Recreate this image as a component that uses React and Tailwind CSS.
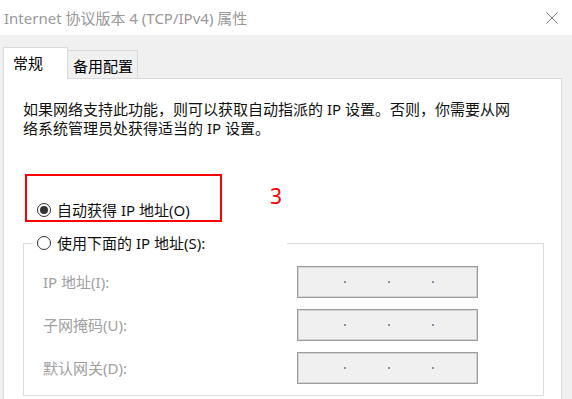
import React from "react";

const font = {
  fontFamily: '"Noto Sans", "Noto Sans CJK SC", sans-serif',
};

function Radio({ checked }) {
  return (
    <span className="flex h-[14px] w-[14px] shrink-0 items-center justify-center rounded-full border border-[#333333] bg-white">
      {checked && <span className="h-[8px] w-[8px] rounded-full bg-[#333333]" />}
    </span>
  );
}

function IpBox() {
  return (
    <div className="flex h-[32px] w-[181px] items-center border border-[#9c9c9c] bg-[#f0f0f0] shadow-[inset_0_0_0_1px_#d4d4d4]">
      <div className="flex items-center gap-[42px] pl-[46px]">
        <span className="h-[2px] w-[2px] bg-[#8c8ca8]" />
        <span className="h-[2px] w-[2px] bg-[#8c8ca8]" />
        <span className="h-[2px] w-[2px] bg-[#8c8ca8]" />
      </div>
    </div>
  );
}

export default function App() {
  const rows = ["IP 地址(I):", "子网掩码(U):", "默认网关(D):"];
  return (
    <div
      className="relative flex h-[399px] w-[572px] flex-col overflow-hidden bg-[#f0f0f0] text-[15px] text-[#111111]"
      style={font}
    >
      {/* title bar */}
      <div className="flex h-[35px] shrink-0 items-center justify-between bg-white pl-[4px] pr-[14px]">
        <span className="leading-[20px] text-[#999999]">Internet 协议版本 4 (TCP/IPv4) 属性</span>
        <svg width="12" height="12" viewBox="0 0 12 12" className="mt-[1px]">
          <path d="M0.5 0.5 L11.5 11.5 M11.5 0.5 L0.5 11.5" stroke="#7a7a7a" strokeWidth="1" />
        </svg>
      </div>

      {/* tabs */}
      <div className="flex items-end pl-[3px] pt-[12px]">
        <div className="relative z-10 -mb-px h-[32px] w-[65px] border border-b-0 border-[#d9d9d9] bg-white pl-[9px] pt-[5px] leading-[20px] text-black">
          常规
        </div>
        <div className="h-[28px] w-[70px] border border-l-0 border-b-0 border-[#d9d9d9] bg-[#f0f0f0] pl-[5px] pt-[5px] leading-[20px] text-black">
          备用配置
        </div>
      </div>

      {/* panel */}
      <div className="ml-[3px] flex-1 w-[559px] border border-b-0 border-[#d9d9d9] bg-white">
        <div className="pl-[19px] pt-[21px] leading-[19px]">
          <p>如果网络支持此功能，则可以获取自动指派的 IP 设置。否则，你需要从网</p>
          <p>络系统管理员处获得适当的 IP 设置。</p>
        </div>

        <div className="mt-[62px] flex h-[20px] items-center gap-[6px] pl-[33px] leading-[20px]">
          <Radio checked />
          <span>自动获得 IP 地址(O)</span>
        </div>

        <fieldset className="ml-[19px] mt-[13px] w-[521px] border border-[#dcdcdc] px-0 pb-[11px]">
          <legend className="ml-[9px] flex h-[20px] w-[254px] items-center gap-[6px] pl-[4px] leading-[20px]">
            <Radio />
            <span>使用下面的 IP 地址(S):</span>
          </legend>
          <div className="flex flex-col gap-[11px] pt-[13px]">
            {rows.map((r) => (
              <div key={r} className="flex items-center">
                <span className="w-[273px] pl-[19px] leading-[20px] text-[#a0a0a0]">{r}</span>
                <IpBox />
              </div>
            ))}
          </div>
        </fieldset>
      </div>

      {/* annotation overlay */}
      <div className="absolute left-[25px] top-[174px] h-[48px] w-[197px] border-2 border-[#ff0000]" />
      <span className="absolute left-[270px] top-[182px] text-[21px] leading-[28px] text-[#ff0000]">3</span>
    </div>
  );
}
